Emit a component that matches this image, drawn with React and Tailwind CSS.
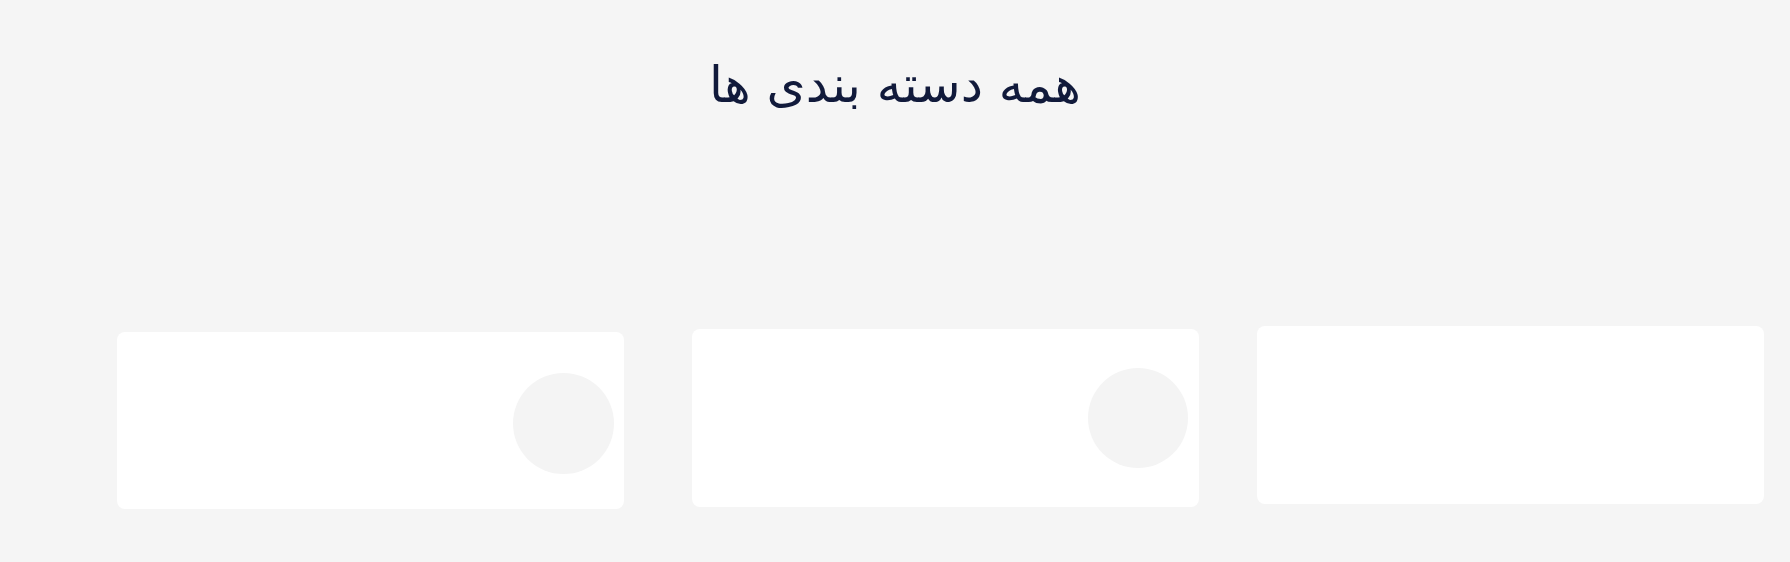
export default function App() {
  return (
    <div className="min-h-[562px] w-full bg-[#f5f5f5] overflow-hidden" dir="rtl">
      {/* Title */}
      <h1 className="pt-[53px] text-center text-[50px] leading-[64px] text-[#111a3b] font-['DejaVu_Sans',sans-serif]">
        همه دسته بندی ها
      </h1>

      {/* Category cards */}
      <div className="mt-[209px] flex items-start" dir="ltr">
        <div className="ml-[117px] mt-[6px] flex h-[177px] w-[507px] items-center justify-end rounded-lg bg-white pr-[10px]">
          <div className="mt-[6px] h-[101px] w-[101px] rounded-full bg-[#f4f4f4]" />
        </div>
        <div className="ml-[68px] mt-[3px] flex h-[178px] w-[507px] items-center justify-end rounded-lg bg-white pr-[11px]">
          <div className="h-[100px] w-[100px] rounded-full bg-[#f4f4f4]" />
        </div>
        <div className="ml-[58px] h-[178px] w-[507px] rounded-lg bg-white" />
      </div>
    </div>
  );
}
